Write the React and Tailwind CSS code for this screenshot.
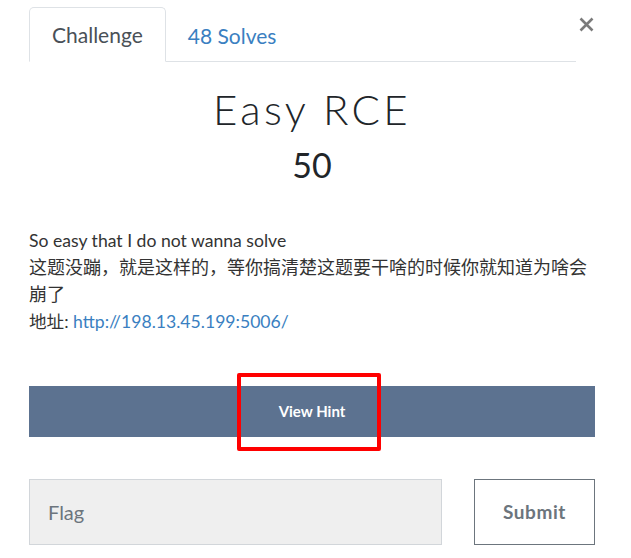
import React from 'react';

const ChallengeModal = () => {
  return (
    <div className="relative w-[631px] h-[558px] bg-white pl-[29px] pr-[36px] font-['Lato','Noto_Sans_CJK_SC',sans-serif]">
      {/* Header: tabs + close */}
      <div className="flex items-start pt-[7px]">
        <div className="flex flex-1 border-b border-[#dee2e6]">
          <div className="-mb-px h-[55px] flex items-center px-[22px] border border-[#dee2e6] border-b-white rounded-t-[5px] bg-white text-[21px] text-[#495057]">
            Challenge
          </div>
          <div className="h-[54px] flex items-center pt-[3px] px-[22px] text-[21px] text-[#3a7fc1]">
            48 Solves
          </div>
        </div>
        <button className="ml-[2px] mt-[9px] w-[17px] h-[17px] flex items-center justify-center">
          <svg width="15" height="15" viewBox="0 0 15 15">
            <path d="M1.5 1.5 L13.5 13.5 M13.5 1.5 L1.5 13.5" stroke="#7b7b7b" strokeWidth="2.6" />
          </svg>
        </button>
      </div>

      {/* Title */}
      <div className="text-center text-[#212529]">
        <h2 className="mt-[22px] text-[42px] leading-[50px] font-light tracking-[0.08em]">Easy RCE</h2>
        <h3 className="mt-[10px] text-[34px] leading-[41px] font-normal">50</h3>
      </div>

      {/* Description */}
      <div className="mt-[42px] text-[17.6px] leading-[27px] text-[#333]">
        <p>So easy that I do not wanna solve</p>
        <p className="text-[18px]">这题没蹦，就是这样的，等你搞清楚这题要干啥的时候你就知道为啥会崩了</p>
        <p>
          地址: <a className="text-[#3a7fc1]">http://198.13.45.199:5006/</a>
        </p>
      </div>

      {/* Hint */}
      <button className="mt-[51px] w-full h-[51px] bg-[#5c7290] text-white text-[15px] font-bold">
        View Hint
      </button>

      {/* Flag form */}
      <div className="mt-[42px] flex gap-[32px]">
        <div className="flex-1 h-[66px] bg-[#efefef] border border-[#d2d6da] flex items-center pl-[18px] text-[20px] text-[#6c757d]">
          Flag
        </div>
        <button className="w-[121px] h-[66px] border border-[#6c757d] bg-white text-[19px] font-bold text-[#6c757d] tracking-[0.03em]">
          Submit
        </button>
      </div>

      {/* Annotation box */}
      <div className="absolute left-[237px] top-[373px] w-[144px] h-[78px] border-[4px] border-[#ff0000] rounded-[2px]"></div>
    </div>
  );
};

export default function App() {
  return <ChallengeModal />;
}
